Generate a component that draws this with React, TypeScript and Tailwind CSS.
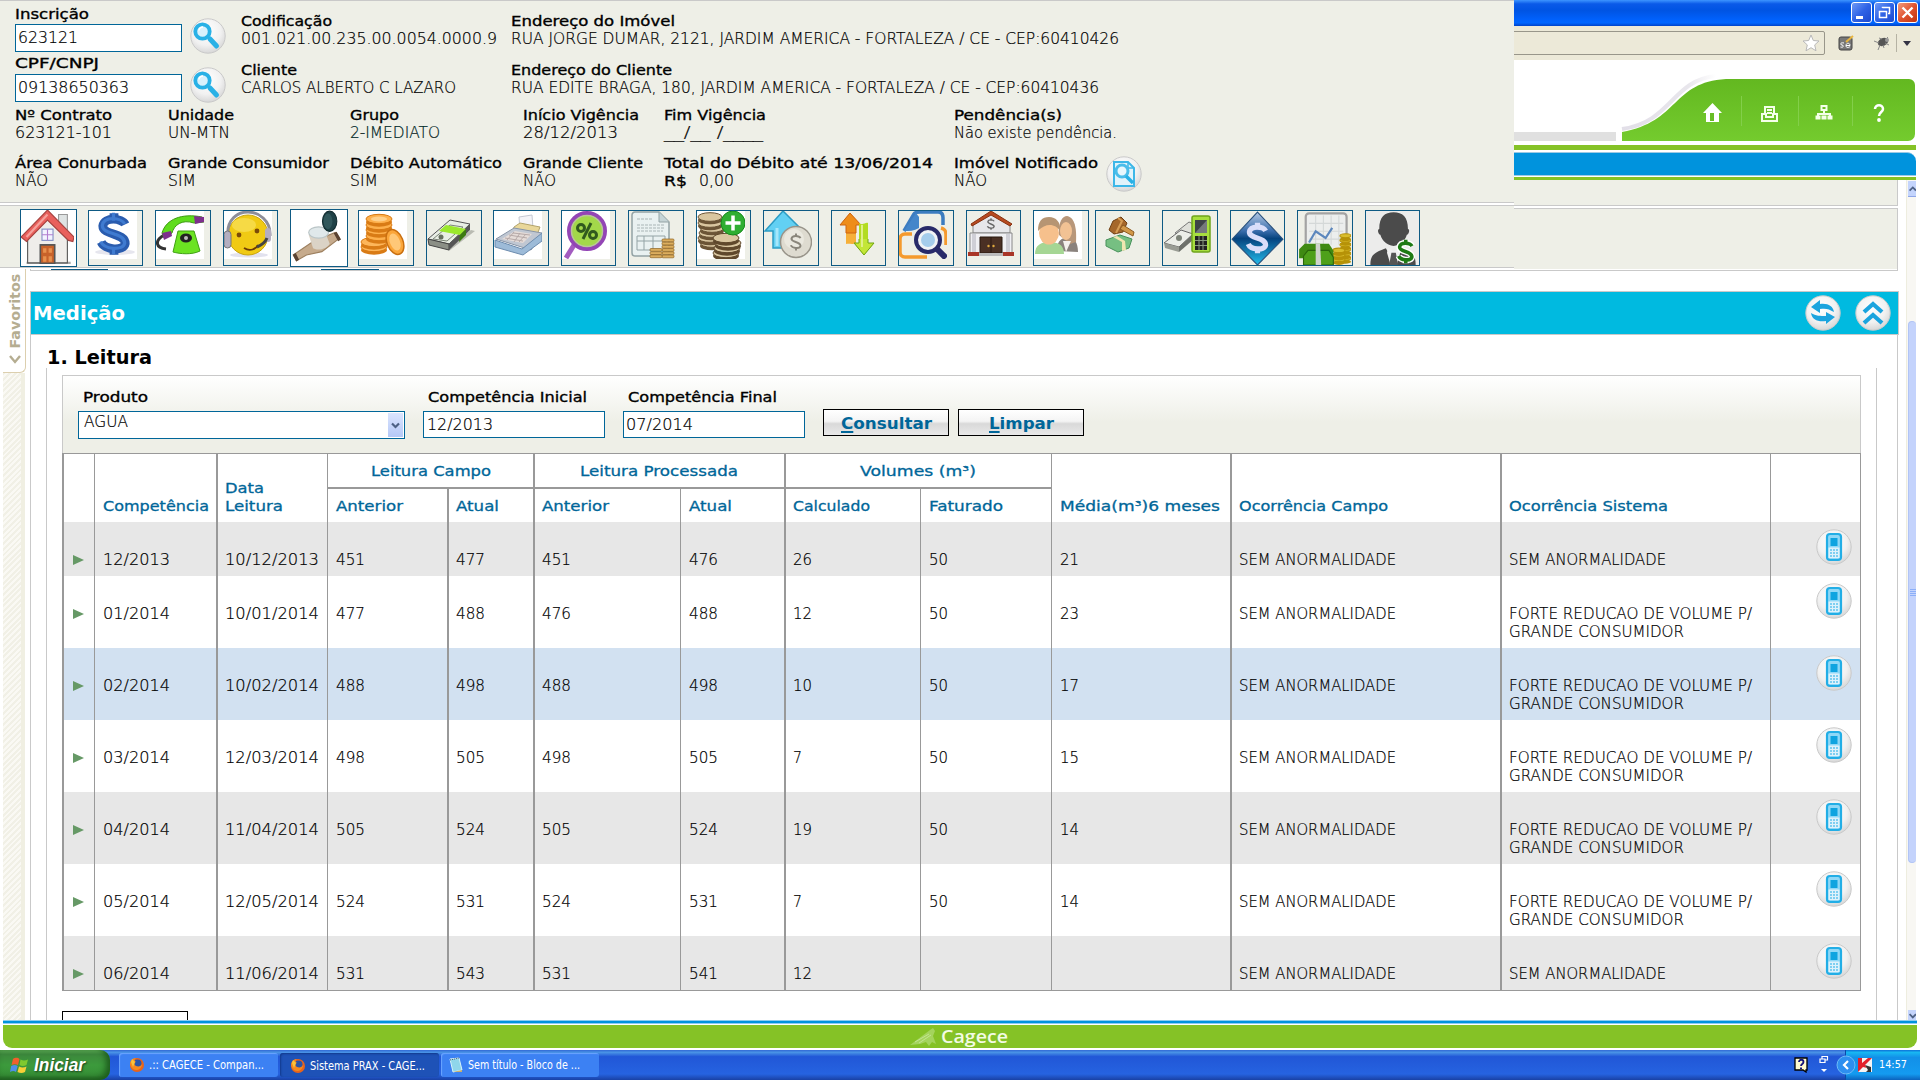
import { useLayoutEffect, useRef, type ReactNode } from 'react';

/* Text run that is stretched horizontally to an exact advance width. */
function T({ w, c = '', children }: { w: number; c?: string; children: ReactNode }) {
  const ref = useRef<HTMLSpanElement>(null);
  useLayoutEffect(() => {
    const el = ref.current;
    if (el && el.offsetWidth) el.style.transform = `scaleX(${w / el.getBoundingClientRect().width})`;
  }, [w]);
  return (
    <span className={`block whitespace-pre leading-[18px] ${c}`} style={{ width: w }}>
      <span ref={ref} className="inline-block origin-left">{children}</span>
    </span>
  );
}

const LABEL = 'text-[14.5px] text-black [-webkit-text-stroke:0.35px_black]';
const VALUE = "font-['DejaVu_Sans_Light','DejaVu_Sans',sans-serif] font-extralight text-[15px] text-black [-webkit-text-stroke:0.2px_black]";
const HEAD = 'text-[14.5px] text-[#006699] [-webkit-text-stroke:0.3px_#006699]';

function Field({ label, lw, value, vw, c = '', vc = '' }: { label: string; lw: number; value: string; vw: number; c?: string; vc?: string }) {
  return (
    <div className={`flex-none ${c}`}>
      <T w={lw} c={LABEL}>{label}</T>
      <T w={vw} c={`${VALUE} ${vc}`}>{value}</T>
    </div>
  );
}

function Orb({ children }: { children: ReactNode }) {
  return (
    <svg viewBox="0 0 36 36" className="block h-9 w-9 flex-none">
      <defs>
        <radialGradient id="orb" cx="45%" cy="35%" r="70%">
          <stop offset="0" stopColor="#fff" />
          <stop offset="0.6" stopColor="#f1f1f1" />
          <stop offset="1" stopColor="#d2d2d2" />
        </radialGradient>
      </defs>
      <circle cx="18" cy="18" r="17.2" fill="url(#orb)" stroke="#c9c9c9" strokeWidth="1" />
      {children}
    </svg>
  );
}

function Lens() {
  return (
    <Orb>
      <path d="M20 21l6.500 7" stroke="#29b1e6" strokeWidth="5" strokeLinecap="round" />
      <circle cx="12.500" cy="13.500" r="7.200" fill="#d9f1fc" stroke="#29b1e6" strokeWidth="3.800" />
      <path d="M9 12.500a4 4 0 014-3.400" stroke="#fff" strokeWidth="1.500" fill="none" />
    </Orb>
  );
}

function Phone() {
  return (
    <Orb>
      <rect x="11" y="5" width="14" height="26" rx="3" fill="#8fd8f7" stroke="#22aee6" strokeWidth="2.200" />
      <rect x="14.500" y="9" width="7" height="8" fill="#0fa4e0" />
      <path d="M12.500 18.500h11v10.500h-11z" fill="#dff2fb" />
      <path d="M14 21h8M14 24h8M14 27h8" stroke="#5fc4ee" strokeWidth="1.500" strokeDasharray="2 1" />
    </Orb>
  );
}

const coin = (x: number, y: number, rx: number, fill: string, stroke: string) => (
  <g key={`${x}-${y}`}>
    <ellipse cx={x} cy={y + 3} rx={rx} ry={rx * 0.36} fill={stroke} />
    <ellipse cx={x} cy={y} rx={rx} ry={rx * 0.36} fill={fill} stroke={stroke} strokeWidth="1" />
  </g>
);

const dollar = (x: number, y: number, s: number, color: string, w: number) => (
  <g transform={`translate(${x} ${y}) scale(${s})`} fill="none" stroke={color} strokeWidth={w}>
    <path d="M7 -6C5 -10 -6 -11 -7 -5C-7 1 7 -1 7 6C6 11 -6 10 -8 5" />
    <path d="M0 -13V-8M0 9V13" />
  </g>
);

const ICONS: { box: string; art: ReactNode; white?: boolean; big?: boolean }[] = [
  { box: 'w-[57px] h-[58px]', white: true, big: true, art: <>
    <path d="M5 47h40" stroke="#aaa" strokeWidth="2" />
    <path d="M34 8V4h8v18h-8z" fill="#dfe3e3" stroke="#999" />
    <path d="M6 26L24 8l18 18v21H6z" fill="#efedea" stroke="#555" strokeWidth="1" />
    <path d="M0 24L24 0l24 24-1 4-4-1L24 9 5 28z" fill="#e9605c" stroke="#a74441" strokeWidth="1" />
    <path d="M5 24L24 4" stroke="#f6a29c" strokeWidth="2" />
    <rect x="19" y="17" width="10" height="10" fill="#f3f3ff" stroke="#8390c4" />
    <path d="M24 17v10M19 22h10" stroke="#b27fd0" />
    <rect x="17.500" y="31" width="13" height="16.500" fill="#c8622a" stroke="#555" strokeWidth="1.500" />
    <path d="M20 34h3v4h-3zM25 34h3v4h-3zM20 41h3v5h-3zM25 41h3v5h-3z" fill="#e8914e" />
  </> },
  { box: 'w-[55px] ml-[11px]', white: true, art: <>
    <ellipse cx="26" cy="41" rx="20" ry="3" fill="#e6e6ee" />{dollar(25, 23, 1.6, '#2a5cae', 5.5)}{dollar(24.500, 22.500, 1.6, '#3f7bd0', 2)}
  </> },
  { box: 'w-[56px] ml-[12px]', white: true, art: <>
    <path d="M8 24C-2 30 0 37 10 38" fill="none" stroke="#333" strokeWidth="3" />
    <path d="M6 22C10 8 26 2 46 6l2 5-10 1C26 8 18 14 16 22l-8 5z" fill="#5fdc1c" stroke="#3d9a12" />
    <path d="M38 5l10 1v5l-9 2zM6 22l9-2 1 5-8 4z" fill="#7d2f8c" />
    <path d="M22 20h16l6 20c-8 4-20 3-27 1z" fill="#6be322" stroke="#3fa013" />
    <ellipse cx="30" cy="27" rx="6" ry="4.500" fill="#222" /><circle cx="30" cy="27" r="2" fill="#bbb" />
  </> },
  { box: 'w-[55px] ml-[12px]', white: true, art: <>
    <ellipse cx="25" cy="44" rx="19" ry="2.500" fill="#e2e2ee" />
    <circle cx="24" cy="24" r="20" fill="#f0ca14" stroke="#c9a40f" />
    <ellipse cx="20" cy="14" rx="12" ry="7" fill="#f6da45" />
    <path d="M4 26C2 8 14 1 24 1s23 8 22 24" fill="none" stroke="#8d8d99" strokeWidth="3" />
    <rect x="0" y="20" width="7" height="17" rx="3.500" fill="#b4aec0" stroke="#777" /><rect x="41" y="17" width="6" height="14" rx="3" fill="#b4aec0" />
    <circle cx="15" cy="24" r="2.400" fill="#7a4a08" /><circle cx="33" cy="20" r="2.400" fill="#7a4a08" />
    <path d="M20 37c6 4 12 1 14-3" fill="none" stroke="#6c3b05" strokeWidth="1.800" /><path d="M43 27c-2 5-5 7-10 9" fill="none" stroke="#444" strokeWidth="3" />
  </> },
  { box: 'w-[58px] h-[58px] ml-[12px]', white: true, big: true, art: <>
    <path d="M2 40l18-12 20-8 4 5-16 12-14 3-9 5z" fill="#c6ab8d" stroke="#9d8060" />
    <path d="M3 39l3 6M40 20l4 7" stroke="#5b4332" strokeWidth="3" />
    <path d="M16 22l4 12c5 3 13 0 15-4l-5-13z" fill="#dbd3c6" />
    <ellipse cx="25" cy="20" rx="9" ry="5" fill="#e0e8ea" stroke="#b9c4c6" />
    <ellipse cx="35" cy="10" rx="6.500" ry="9" fill="#1f4146" stroke="#122c30" /><ellipse cx="33.500" cy="10" rx="4" ry="7" fill="#31575b" />
  </> },
  { box: 'w-[56px] ml-[10px]', white: true, art: <>
    {[36, 31].map((y) => coin(15, y, 13, '#fdb65a', '#d97b15'))}{[25, 19, 14, 8].map((y) => coin(20, y, 13, '#fdb04c', '#d97b15'))}
    <ellipse cx="20" cy="8" rx="8" ry="2.500" fill="#ffd08a" />
    <ellipse cx="36" cy="31" rx="8" ry="13" transform="rotate(-22 36 31)" fill="#fba63a" stroke="#c96f10" strokeWidth="1.500" />
    <ellipse cx="36" cy="31" rx="5" ry="9" transform="rotate(-22 36 31)" fill="#ffc878" />
  </> },
  { box: 'w-[56px] ml-[12px]', art: <>
    <path d="M22 40l26-20-4-1-24 17z" fill="#b9bbb2" />
    <path d="M1 28l22-19 20 4-21 20z" fill="#e8eee4" stroke="#555" /><path d="M1 28l21 5v6L2 34z" fill="#8b8f86" stroke="#444" /><path d="M22 33l21-20v6L22 39z" fill="#555" />
    <path d="M6 28l17-14 13 2-16 14z" fill="none" stroke="#7b8476" /><path d="M12 20l7-6 20 4-6 6z" fill="#9be82c" /><path d="M33 24l6-6v6l-7 7z" fill="#3c7a10" />
    <circle cx="14" cy="26" r="2.500" fill="#67705f" />
  </> },
  { box: 'w-[56px] ml-[11px]', white: true, art: <>
    <path d="M25 6l13-2 1 14-13 1z" fill="#f4f4f8" stroke="#c5c8d2" />
    <path d="M20 16l6-4 20 4-3 8-24-5z" fill="#e9d79a" stroke="#b3a46c" />
    <path d="M2 28l18-11 28 5-11 17z" fill="#c0c7d2" stroke="#8794a7" />
    <path d="M8 28l13-8 17 3-9 9z" fill="#e5dcd8" /><path d="M11 27l18 3M15 24l18 3M19 22l17 2M20 21l-7 8M26 22l-6 9M32 23l-7 8" stroke="#b6a9a8" />
    <path d="M1 29l27 9 20-16v8L29 44 1 36z" fill="#9dbbd8" stroke="#6d8cae" />
  </> },
  { box: 'w-[55px] ml-[12px]', white: true, art: <>
    <path d="M12 34L4 47" stroke="#a35cc0" strokeWidth="5" />
    <circle cx="25" cy="20" r="18" fill="#a3d84a" stroke="#9345b5" strokeWidth="4" /><circle cx="25" cy="20" r="15.500" fill="none" stroke="#b9c59a" strokeWidth="1.500" />
    <g fill="none" stroke="#315a1e" strokeWidth="3"><circle cx="19" cy="17" r="3.500" /><circle cx="31" cy="24" r="3.500" /><path d="M29 12L21 28" /></g>
  </> },
  { box: 'w-[56px] ml-[12px]', art: <>
    <path d="M6 1h24l10 10v34H6a3 3 0 01-3-3V4a3 3 0 013-3z" fill="#e9f1f1" stroke="#93a3a5" strokeWidth="1.500" /><path d="M30 1v10h10" fill="#c5d4d6" stroke="#93a3a5" />
    <path d="M8 8h16M8 14h28M8 17h28M8 20h26" stroke="#a9b5b6" strokeDasharray="3 1" />
    <path d="M8 25h28v14H8zM8 30h28M15 25v14M24 25v14" stroke="#93a3a5" fill="none" />
    {[0, 1, 2, 3, 4, 5].map((i) => <rect key={i} x="33" y={28 + i * 3.200} width="12" height="2.800" rx="1" fill="#dcae5f" stroke="#8f6422" strokeWidth=".7" />)}
    {[0, 1, 2].map((i) => <rect key={i} x="21" y={37.500 + i * 3.200} width="12" height="2.800" rx="1" fill="#dcae5f" stroke="#8f6422" strokeWidth=".7" />)}
  </> },
  { box: 'w-[55px] ml-[12px]', white: true, art: <>
    {[32, 27, 22, 17, 12, 6].map((y) => coin(13 + (y % 3), y, 12, '#d9c6a0', '#6b5436'))}
    {[42, 37, 32, 27].map((y) => coin(29 + (y % 3), y, 13, '#d9c6a0', '#5f482c'))}
    <circle cx="36" cy="12" r="12" fill="#2fae32" stroke="#178a1c" /><path d="M36 4.500v15M28.500 12h15" stroke="#fff" strokeWidth="3.500" />
  </> },
  { box: 'w-[56px] ml-[12px]', art: <>
    <path d="M19 0l19 19-9 1v17H9V20H1z" fill="#62d0f3" stroke="#2d9cc4" strokeWidth="1.500" /><path d="M13 17v18" stroke="#a5e7fb" strokeWidth="3" />
    <circle cx="32" cy="31" r="15.500" fill="#dedbd0" stroke="#98948a" strokeWidth="1.500" /><circle cx="30" cy="28" r="10" fill="#eae8df" />{dollar(32, 31, 0.65, '#8a867b', 3)}
  </> },
  { box: 'w-[55px] ml-[12px]', art: <>
    <path d="M18 2l11 12h-5v18c-4 2-7 0-10 1V14H8z" fill="#f6b03a" /><path d="M18 2l11 12h-5v8H14v-8H8z" fill="#ee8d1a" stroke="#cf6411" />
    <path d="M27 12c4 3 6-1 9 0v20h6L32 44 22 32h5z" fill="#b3dc22" /><path d="M27 28v4h-5l10 12 10-12h-6v-4" fill="#c3e637" stroke="#6fa410" /><path d="M30 14v22" stroke="#dff08a" strokeWidth="2" />
  </> },
  { box: 'w-[56px] ml-[12px]', art: <>
    <path d="M5 20L15 3c2-3 6-2 10-2h14c4 0 5 3 5 6v7" fill="none" stroke="#3c7cc0" strokeWidth="3.500" /><path d="M5 20L17 2l3 4v11c-5 3-10 3-15 3z" fill="#4486ca" />
    <path d="M13 23H6c-3 0-5 2-5 5v13c0 3 2 5 5 5h22M42 17c4 1 5 3 5 7v10" fill="none" stroke="#f59a2e" strokeWidth="3.500" />
    <path d="M36 36l11 11" stroke="#282a69" strokeWidth="6" /><circle cx="29" cy="29" r="12" fill="#f1f3f6" stroke="#282a69" strokeWidth="4" /><circle cx="29" cy="29" r="7" fill="#a6cdec" />
  </> },
  { box: 'w-[55px] ml-[12px]', art: <>
    <path d="M6 14L24 2l19 12v8H6z" fill="#e7e7ea" stroke="#888" /><path d="M4 13L24 0l21 13-2 2L24 4 5 15z" fill="#b84a21" stroke="#86310f" />
    <path d="M3 22h42v20H3z" fill="#f0f0f3" stroke="#888" /><path d="M7 23v19M41 23v19" stroke="#cfcfd6" strokeWidth="4" />
    <path d="M13 26h22v16H13z" fill="#4a3024" stroke="#29180f" /><path d="M24 26v16" stroke="#2a1810" /><circle cx="21.500" cy="35" r="1.200" fill="#e0a93e" /><circle cx="26.500" cy="35" r="1.200" fill="#e0a93e" />
    <path d="M1 41h11v4H1zM36 41h11v4H36z" fill="#a93527" /><path d="M12 42h24v3H12z" fill="#bbb" />{dollar(24, 13, 0.45, '#666', 3)}
  </> },
  { box: 'w-[56px] ml-[12px]', white: true, art: <>
    <path d="M23 40c0-12 6-13 11-14 6 1 10 5 10 15z" fill="#8a827d" /><path d="M25 24c-1-14 4-19 8-19 6 1 10 8 9 26l-6 2z" fill="#b8977a" />
    <ellipse cx="32" cy="20" rx="6" ry="9" fill="#f2c294" /><path d="M29 30l3 11 5-11z" fill="#f4f0ec" />
    <path d="M1 43c0-9 6-12 14-12s15 2 15 12z" fill="#a5d694" /><ellipse cx="15" cy="22" rx="10" ry="11.500" fill="#f6c08c" />
    <path d="M4 20C4 10 8 6 15 6s12 5 11 14c-4-7-14-9-22 0z" fill="#b69573" />
  </> },
  { box: 'w-[55px] ml-[6px]', art: <>
    <path d="M10 29l14-5 12 4-3 9-11 4-12-6z" fill="#76bf82" stroke="#47915a" /><path d="M17 26l9 5v9l4-1-1-9-8-5z" fill="#efe6b0" />
    <path d="M17 10l8-4 6 6-4 9-9 2-5-4z" fill="#a5672a" stroke="#6f3f12" /><path d="M27 14l11 7-1 4-13-7z" fill="#d29848" stroke="#8c5a20" /><path d="M22 7l4 3-6 12" stroke="#d79d55" fill="none" strokeWidth="2" />
  </> },
  { box: 'w-[56px] ml-[12px]', art: <>
    <path d="M12 22l14-11 11 5-11 10z" fill="#dfe0da" stroke="#777" /><path d="M1 32l17-13 12 4-14 13z" fill="#eceee8" stroke="#666" /><path d="M1 32l15 4v5L2 37z" fill="#999c94" /><path d="M16 36l14-13v6L16 41z" fill="#6e716b" />
    <circle cx="16" cy="27" r="3" fill="#7d8378" />
    <rect x="29" y="5" width="18" height="36" rx="2" fill="#a7de3e" stroke="#6fa41d" strokeWidth="1.500" /><rect x="32" y="9" width="12" height="13" fill="#3e4347" /><path d="M32 22l12-13v13z" fill="#75797c" />
    <path d="M32 25h12v14H32z" fill="#222" /><path d="M32 29.500h12M32 34.500h12M36 25v14M40 25v14" stroke="#8a9a80" />
  </> },
  { box: 'w-[55px] ml-[12px]', big: true, art: <>
    <defs><linearGradient id="dia" x1="0" y1="0" x2="0" y2="1"><stop offset="0" stopColor="#b5cae4" /><stop offset=".35" stopColor="#3c6fae" /><stop offset=".5" stopColor="#05437e" /><stop offset="1" stopColor="#23bdec" /></linearGradient></defs>
    <path d="M24 1l23 24-23 23L1 25z" fill="url(#dia)" stroke="#29517d" />{dollar(24, 24, 1.05, '#d9defa', 4.500)}
  </> },
  { box: 'w-[56px] ml-[12px]', big: true, art: <>
    <rect x="7" y="2" width="37" height="36" rx="3" fill="#eceeed" stroke="#a3a3a3" strokeWidth="2" /><path d="M10 11h31M10 18h31M10 25h31M16 4v26M23 4v26M30 4v26M37 4v26" stroke="#d4d8d8" />
    <path d="M10 28l6-10 9 6 6-9" fill="none" stroke="#5c87bd" strokeWidth="2" />
    {[42, 38, 34, 30, 26, 22].map((y) => coin(43, y, 5, '#d9bd2c', '#b69208'))}{[43, 39, 35].map((y) => coin(37, y, 5.5, '#d9bd2c', '#b69208'))}
    <path d="M1 34l5-5h22l4 6v7H1z" fill="#3f8a12" /><path d="M5 40l4-5h19l4 6v7H5z" fill="#4ea01a" stroke="#2a660a" /><path d="M16 29h4l1 19h-5z" fill="#cfd3cd" />
  </> },
  { box: 'w-[55px] ml-[12px]', big: true, art: <>
    <rect width="48" height="50" fill="#ececeb" /><path d="M12 16C12 5 17 1 25 1s13 4 13 15c2 0 1 5-1 5-2 6-6 9-12 10-6-1-10-4-12-10-2 0-3-5-1-5z" fill="#4b4b4b" />
    <path d="M4 48c0-9 3-11 14-15l7 13 7-13c10 3 13 6 13 15z" fill="#4b4b4b" /><path d="M20 33l5 3 5-3 1 4-3 10h-6l-3-10z" fill="#f1f1f1" /><path d="M23 37h4l2 11h-8z" fill="#555" />
    {dollar(36, 36, 0.8, '#fff', 7)}{dollar(36, 36, 0.8, '#1e7a14', 4)}
  </> },
];

function Toolbar() {
  return (
    <div className="flex h-[63px] items-center border-y border-[#c9c9c9] bg-[#eeefe7] pl-5 pt-[2px]">
      {ICONS.map((it, i) => (
        <div key={i} className={`flex-none border border-[#0e5a84] ${it.box} ${it.box.includes('h-[58px]') ? 'bg-white' : 'h-14'}`}>
          <svg viewBox="0 0 48 48" className={`block ${it.big ? 'h-[54px] w-[53px]' : 'h-12 w-12'} ${it.white ? 'bg-white' : ''}`} preserveAspectRatio="none">{it.art}</svg>
        </div>
      ))}
    </div>
  );
}

function ClientPanel() {
  return (
    <div className="absolute left-0 top-0 h-[269px] w-[1514px] overflow-hidden bg-white">
      <div className="h-[203px] border-y border-[#c9c9c9] bg-[#eeefe7] pl-[15px]">
        <div className="flex h-[102px]">
          <div className="w-[175px]">
            <div className="pt-1"><T w={74} c={LABEL}>Inscrição</T></div>
            <div className="mt-px flex h-7 w-[167px] items-center border border-[#006699] bg-white pl-[2px]"><T w={60} c={VALUE}>623121</T></div>
            <div className="pt-[2px]"><T w={84} c={LABEL}>CPF/CNPJ</T></div>
            <div className="mt-[2px] flex h-7 w-[167px] items-center border border-[#006699] bg-white pl-[2px]"><T w={111} c={VALUE}>09138650363</T></div>
          </div>
          <div className="flex w-[51px] flex-col gap-[13px] pt-[17px]"><Lens /><Lens /></div>
          <div className="flex w-[270px] flex-col gap-[13px] pt-[11px]">
            <Field label="Codificação" lw={91} value="001.021.00.235.00.0054.0000.9" vw={256} />
            <Field label="Cliente" lw={56} value="CARLOS ALBERTO C LAZARO" vw={215} />
          </div>
          <div className="flex flex-col gap-[13px] pt-[11px]">
            <Field label="Endereço do Imóvel" lw={164} value="RUA JORGE DUMAR, 2121, JARDIM AMERICA - FORTALEZA / CE - CEP:60410426" vw={608} />
            <Field label="Endereço do Cliente" lw={161} value="RUA EDITE BRAGA, 180, JARDIM AMERICA - FORTALEZA / CE - CEP:60410436" vw={588} />
          </div>
        </div>
        <div className="flex h-12 pt-[3px]">
          <Field c="w-[153px]" label="Nº Contrato" lw={97} value="623121-101" vw={97} />
          <Field c="w-[182px]" label="Unidade" lw={66} value="UN-MTN" vw={62} />
          <Field c="w-[173px]" label="Grupo" lw={49} value="2-IMEDIATO" vw={90} vc="!text-[#003a3a]" />
          <Field c="w-[141px]" label="Início Vigência" lw={116} value="28/12/2013" vw={95} />
          <Field c="w-[290px]" label="Fim Vigência" lw={102} value="__/__ /____" vw={99} />
          <Field label="Pendência(s)" lw={108} value="Não existe pendência." vw={163} />
        </div>
        <div className="flex h-12 pt-[3px]">
          <Field c="w-[153px]" label="Área Conurbada" lw={132} value="NÃO" vw={33} />
          <Field c="w-[182px]" label="Grande Consumidor" lw={161} value="SIM" vw={28} />
          <Field c="w-[173px]" label="Débito Automático" lw={152} value="SIM" vw={28} />
          <Field c="w-[141px]" label="Grande Cliente" lw={120} value="NÃO" vw={33} />
          <div className="w-[290px]">
            <T w={269} c={LABEL}>Total do Débito até 13/06/2014</T>
            <div className="flex gap-3"><T w={23} c={LABEL}>R$</T><T w={35} c={VALUE}>0,00</T></div>
          </div>
          <Field c="w-[152px]" label="Imóvel Notificado" lw={144} value="NÃO" vw={33} />
          <div className="mt-[2px]">
            <Orb>
              <path d="M8 6h14l6 6v18H8z" fill="#e2f3fb" stroke="#3db7e8" strokeWidth="2" /><path d="M22 6v6h6" fill="none" stroke="#3db7e8" strokeWidth="1.500" />
              <circle cx="16" cy="15" r="6" fill="#e8f7fd" stroke="#4bbdea" strokeWidth="3" /><path d="M20 20l7 7" stroke="#29b1e6" strokeWidth="3.500" />
            </Orb>
          </div>
        </div>
      </div>
      <div className="mt-[2px]"><Toolbar /></div>
    </div>
  );
}

function WinButton({ red, children }: { red?: boolean; children: ReactNode }) {
  return (
    <div className={`h-[21px] w-[21px] rounded-[3px] border border-white ${red ? 'bg-gradient-to-br from-[#f0997c] via-[#e0532f] to-[#c0340f]' : 'bg-gradient-to-br from-[#6f98f5] via-[#2f63e6] to-[#1c49cf]'}`}>
      <svg viewBox="0 0 19 19" className="block h-[19px] w-[19px]" fill="none" stroke="#fff">{children}</svg>
    </div>
  );
}

function BrowserTop() {
  return (
    <>
      <div className="flex h-[26px] flex-none justify-end gap-[2px] bg-[linear-gradient(#3d95ff_0,#0a5ae8_15%,#0054e3_40%,#0061fc_75%,#0066ff_88%,#0042c8_100%)] pr-[2px] pt-[2px]">
        <WinButton><path d="M4 14.500h7" strokeWidth="3" /></WinButton>
        <WinButton><path d="M7.500 5V4.500h7v6H13M4.500 8.500h7v6h-7z" strokeWidth="1.500" /></WinButton>
        <WinButton red><path d="M4.500 4.500l10 10M14.500 4.500l-10 10" strokeWidth="2.400" /></WinButton>
      </div>
      <div className="flex h-[34px] flex-none items-center bg-[#ece9d8]">
        <div className="mb-px flex h-6 w-[1825px] items-center justify-end rounded-[2px] border border-[#98968a] pr-[4px]">
          <svg viewBox="0 0 18 18" className="h-[18px] w-[18px]"><path d="M9 1l2.300 5.500 5.700.5-4.300 3.900 1.300 5.900L9 13.700l-5 3.100 1.300-5.900L1 7l5.700-.5z" fill="#fff" stroke="#b8b8b8" /></svg>
        </div>
        <svg viewBox="0 0 16 16" className="ml-[13px] h-4 w-4"><rect x="1" y="2" width="13" height="13" rx="2" fill="#777" stroke="#444" /><path d="M6 8c-4-1-4 2-2 2s2 3-1.500 2M8 10.500h4c0-3-4-3-4 0s3 2 4 1" stroke="#fff" fill="none" /><path d="M8 7l7-6" stroke="#e8b43d" strokeWidth="2" /></svg>
        <svg viewBox="0 0 16 14" className="ml-[20px] h-[14px] w-4"><ellipse cx="9" cy="6" rx="5.500" ry="3.800" transform="rotate(-25 9 6)" fill="#555" /><path d="M5 7L0 5M6 9l-2 5M9 9l1 3M11 7l4 2M8 3L5 2M12 3l2-2" stroke="#888" /><circle cx="13" cy="4" r="2" fill="#999" /></svg>
        <div className="ml-[6px] h-[18px] w-px bg-[#b5b2a3]" />
        <svg viewBox="0 0 8 5" className="ml-[6px] h-[5px] w-2"><path d="M0 0h8L4 5z" fill="#334" /></svg>
      </div>
    </>
  );
}

function SiteHeader() {
  return (
    <div className="flex h-[120px] flex-none flex-col bg-white pr-1">
      <div className="flex h-[81px] items-end">
        <div className="h-[9px] w-[1616px] bg-[#e0e0e0]" />
        <svg viewBox="1616 60 300 81" className="h-[81px] w-[300px]">
          <defs>
            <linearGradient id="tab" x1="0" y1="0" x2="0" y2="1"><stop offset="0" stopColor="#63b820" /><stop offset="1" stopColor="#74cb2e" /></linearGradient>
            <linearGradient id="glow" x1="0" y1="0" x2="1" y2="0"><stop offset="0" stopColor="#e2dfe8" /><stop offset=".7" stopColor="#e8e6ec" /><stop offset="1" stopColor="#ffffff" /></linearGradient>
          </defs>
          <path d="M1622 129C1672 122 1672 80 1716 76" fill="none" stroke="url(#glow)" strokeWidth="4" />
          <path d="M1622 141v-9C1679 122 1672 82 1726 79H1909a6 6 0 016 6v49a7 7 0 01-7 7z" fill="url(#tab)" />
          <path d="M1741.500 96v30M1798.500 96v30M1852.500 96v30" stroke="#83cf4a" />
          <path d="M1703 113l9.500-10 9.500 10h-3v9h-13v-9z" fill="#fff" /><path d="M1710 113h4v8h-4z" fill="#68bd25" />
          <g fill="none" stroke="#f4ffe9" strokeWidth="2"><path d="M1765 115v-8h9v8M1762 114h-0v7h15v-7h-4v3h-7v-3zM1767 110h5M1767 113h5" /><path d="M1821.500 106h5v4h-5zM1824 110v4M1818 116v-2h12v2M1816.500 116.500h3v2h-3zM1822.500 116.500h3v2h-3zM1828.500 116.500h3v2h-3z" /></g>
          <path d="M1875 109c0-5 8-5 8 0 0 3-4 3-4 7" fill="none" stroke="#fff" strokeWidth="2.500" /><circle cx="1879" cy="120" r="1.900" fill="#fff" />
        </svg>
      </div>
      <div className="mt-1 h-[5px] bg-[#85c226]" />
      <div className="mt-[2px] h-[24px] rounded-tr-[9px] border-y border-[#9cc9e4] bg-[#0093dd]" />
      <div className="mt-px h-[3px] bg-[#85c226]" />
    </div>
  );
}

function Scrollbar() {
  return (
    <div className="ml-[7px] mr-1 flex w-[10px] flex-none flex-col overflow-hidden border-l border-[#eeeddf] bg-[#f8f7f3]">
      <div className="ml-px mt-px flex h-4 items-center justify-center border-b border-[#8ea6e8] bg-[#c4d4fc]"><svg viewBox="0 0 10 8" className="h-2 w-[10px]"><path d="M2 6l4-4 4 4" fill="none" stroke="#4d6185" strokeWidth="2.200" /></svg></div>
      <div className="ml-px mt-[124px] flex h-[542px] flex-col items-end justify-center gap-px rounded-sm border border-[#b1c4f5] border-r-0 bg-[#c4d3fc]">
        {[0, 1, 2, 3].map((i) => <div key={i} className="h-px w-[6px] bg-[#8caff8]" />)}
      </div>
      <div className="ml-px mt-auto flex h-[10px] items-center justify-center bg-[#c4d4fc]"><svg viewBox="0 0 10 8" className="h-2 w-[10px]"><path d="M2 3l4 4 4-4" fill="none" stroke="#4d6185" strokeWidth="2.200" /></svg></div>
    </div>
  );
}

const COLS = 'grid grid-cols-[32px_122px_111px_120px_86px_147px_104px_136px_131px_179px_270px_270px_91px]';
const BORDERS = ['border-l-2', 'border-l pl-[8px]', 'border-l-2 pl-[7px]', 'border-l pl-[8px]', 'border-l-2 pl-[7px]', 'border-l-2 pl-[7px]', 'border-l pl-[8px]', 'border-l-2 pl-[7px]', 'border-l pl-[8px]', 'border-l pl-[8px]', 'border-l-2 pl-[7px]', 'border-l-2 pl-[7px]', 'border-x'];

const F: [string, number][] = [['FORTE REDUCAO DE VOLUME P/', 243], ['GRANDE CONSUMIDOR', 175]];
const S: [string, number][] = [['SEM ANORMALIDADE', 157]];
const ROWS: { v: string[]; s: [string, number][] }[] = [
  { v: ['12/2013', '10/12/2013', '451', '477', '451', '476', '26', '50', '21'], s: S },
  { v: ['01/2014', '10/01/2014', '477', '488', '476', '488', '12', '50', '23'], s: F },
  { v: ['02/2014', '10/02/2014', '488', '498', '488', '498', '10', '50', '17'], s: F },
  { v: ['03/2014', '12/03/2014', '498', '505', '498', '505', '7', '50', '15'], s: F },
  { v: ['04/2014', '11/04/2014', '505', '524', '505', '524', '19', '50', '14'], s: F },
  { v: ['05/2014', '12/05/2014', '524', '531', '524', '531', '7', '50', '14'], s: F },
  { v: ['06/2014', '11/06/2014', '531', '543', '531', '541', '12', '', ''], s: S },
];
const WIDTHS: Record<number, number> = { 1: 9, 2: 19, 3: 29, 7: 67, 10: 94 };

function Single({ i, children }: { i: number; children?: ReactNode }) {
  return <div className={`flex flex-col justify-end border-[#999] pb-[7px] ${BORDERS[i]}`}>{children}</div>;
}

function Group({ title, tw, span, l, r }: { title: string; tw: number; span: string; l: [number, string, number]; r: [number, string, number] }) {
  return (
    <div className={`grid grid-rows-[35px_33px] ${span}`}>
      <div className={`col-span-2 flex items-center justify-center border-b-2 border-[#999] pr-[8px] pt-px ${BORDERS[l[0]]}`}><T w={tw} c={HEAD}>{title}</T></div>
      <div className={`flex items-center border-[#999] pt-px ${BORDERS[l[0]]}`}><T w={l[2]} c={HEAD}>{l[1]}</T></div>
      <div className={`flex items-center border-[#999] pt-px ${BORDERS[r[0]]}`}><T w={r[2]} c={HEAD}>{r[1]}</T></div>
    </div>
  );
}

function ReadingsTable() {
  return (
    <div className="w-[1799px] border-b border-[#999] bg-white">
      <div className={`${COLS} h-[69px] border-t border-[#999]`}>
        <Single i={0} />
        <Single i={1}><T w={106} c={HEAD}>Competência</T></Single>
        <Single i={2}><T w={39} c={HEAD}>Data</T><T w={58} c={HEAD}>Leitura</T></Single>
        <Group title="Leitura Campo" tw={120} span="col-span-2 grid-cols-[120px_86px]" l={[3, 'Anterior', 67]} r={[4, 'Atual', 43]} />
        <Group title="Leitura Processada" tw={158} span="col-span-2 grid-cols-[147px_104px]" l={[5, 'Anterior', 67]} r={[6, 'Atual', 43]} />
        <Group title="Volumes (m³)" tw={116} span="col-span-2 grid-cols-[136px_131px]" l={[7, 'Calculado', 77]} r={[8, 'Faturado', 74]} />
        <Single i={9}><T w={160} c={HEAD}>Média(m³)6 meses</T></Single>
        <Single i={10}><T w={149} c={HEAD}>Ocorrência Campo</T></Single>
        <Single i={11}><T w={159} c={HEAD}>Ocorrência Sistema</T></Single>
        <Single i={12} />
      </div>
      {ROWS.map((row, r) => (
        <div key={r} className={`${COLS} ${row.s.length > 1 ? 'h-[72px]' : 'h-[54px]'} ${r === 2 ? 'bg-[#d2e1f1]' : r % 2 ? 'bg-white' : 'bg-[#e7e7e7]'}`}>
          <div className="border-l-2 border-[#999] pl-[9px] pt-[33px]">
            <svg viewBox="0 0 11 10" className="h-[10px] w-[11px]"><path d="M0 0l11 5-11 5z" fill="#669966" /></svg>
          </div>
          {row.v.map((t, i) => (
            <div key={i} className={`border-[#999] pt-[29px] ${BORDERS[i + 1]}`}>{t && <T w={WIDTHS[t.length]} c={VALUE}>{t}</T>}</div>
          ))}
          <div className={`border-[#999] pt-[29px] ${BORDERS[10]}`}><T w={157} c={VALUE}>SEM ANORMALIDADE</T></div>
          <div className={`border-[#999] pt-[29px] ${BORDERS[11]}`}>{row.s.map(([t, w]) => <T key={t} w={w} c={VALUE}>{t}</T>)}</div>
          <div className="flex justify-end border-x border-[#999] pr-2 pt-[7px]"><Phone /></div>
        </div>
      ))}
    </div>
  );
}

function Filter() {
  const btn = 'flex h-[27px] w-[126px] items-center justify-center border border-black bg-[linear-gradient(#fff_0%,#f4f4f4_45%,#d9d9d9_55%,#e9e9e9_100%)] pt-[2px] text-[16px] font-bold text-[#006699]';
  return (
    <div className="mt-[7px] flex h-[78px] w-[1799px] border border-b-0 border-[#c9c9c9] bg-[linear-gradient(#fff_0%,#eeefe7_60%)] pl-[15px] pt-[12px]">
      <div className="w-[345px]">
        <T w={65} c={`ml-[5px] ${LABEL}`}>Produto</T>
        <div className="mt-[5px] flex h-7 w-[327px] justify-between border border-[#006699] bg-white py-px pl-[5px] pr-px">
          <T w={44} c={VALUE}>AGUA</T>
          <div className="flex h-6 w-[15px] items-center justify-center bg-gradient-to-b from-[#dbe5fe] to-[#b5c8f7]"><svg viewBox="0 0 9 7" className="h-[7px] w-[9px]"><path d="M1 1.500l3.500 3.500L8 1.500" fill="none" stroke="#4d6185" strokeWidth="2.200" /></svg></div>
        </div>
      </div>
      <div className="w-[200px]">
        <T w={159} c={`ml-[5px] ${LABEL}`}>Competência Inicial</T>
        <div className="mt-[5px] flex h-[27px] w-[182px] items-center border border-[#006699] bg-white pl-[3px]"><T w={66} c={VALUE}>12/2013</T></div>
      </div>
      <div className="w-[200px]">
        <T w={149} c={`ml-[5px] ${LABEL}`}>Competência Final</T>
        <div className="mt-[5px] flex h-[27px] w-[182px] items-center border border-[#006699] bg-white pl-[2px]"><T w={67} c={VALUE}>07/2014</T></div>
      </div>
      <div className="mt-[21px] flex gap-[9px]">
        <div className={btn}><T w={91}><span className="underline decoration-2 underline-offset-2">C</span>onsultar</T></div>
        <div className={btn}><T w={65}><span className="underline decoration-2 underline-offset-2">L</span>impar</T></div>
      </div>
    </div>
  );
}

function Content() {
  return (
    <div className="flex h-[840px] flex-none overflow-hidden bg-white">
      <div className="flex w-[30px] flex-none flex-col pl-[3px] pr-1">
        <div className="flex h-[193px] flex-col items-center rounded-br-[6px] border-b border-r border-[#dccfae] bg-white pl-[2px] pt-[93px]">
          <div className="flex h-[76px] items-center justify-center">
            <span className="-rotate-90 whitespace-nowrap text-[14.3px] font-bold leading-none text-[#b5ad91]">Favoritos</span>
          </div>
          <svg viewBox="0 0 14 10" className="mt-[6px] h-[10px] w-[14px]"><path d="M2 1l5 6 5-6" fill="none" stroke="#b5ad91" strokeWidth="2.400" /></svg>
        </div>
        <div className="w-[22px] flex-1 border-r-4 border-[#f0efe2] bg-[repeating-linear-gradient(135deg,#f1f0e6_0_2px,#faf9f4_2px_4px)]" />
      </div>
      <div className="w-[1869px] flex-none">
        <div className="h-[26px] w-[1868px] border-b border-r border-[#c9c9c9] bg-[#eeefe7]" />
        <div className="mt-[2px] h-[63px] w-[1868px] border border-[#c9c9c9] bg-[#eeefe7]">
          <div className="mt-[60px] flex h-px gap-[213px] bg-white pl-[20px]"><div className="h-px w-[57px] bg-[#0e5a84]" /><div className="h-px w-[58px] bg-[#0e5a84]" /></div>
        </div>
        <div className="mt-5 flex h-11 items-center border border-[#c9c9c9] bg-[#00bae0] pl-[2px] pr-[7px]">
          <T w={92} c="flex-1 text-[19px] font-bold text-white">Medição</T>
          <div className="ml-auto flex gap-[14px]">
            <Orb><path d="M6 12l9-7v4c8-1 13 2 14 8-5-3-8-4-14-3v4zM30 22l-9 7v-3C13 27 7 25 6 18c5 3 9 3 15 3v-4z" fill="#1ba4de" /></Orb>
            <Orb><path d="M9 17l9-8 9 8M9 28l9-8 9 8" fill="none" stroke="#1ba4de" strokeWidth="4.200" /></Orb>
          </div>
        </div>
        <div className="h-[685px] w-[1868px] border-x border-[#c9c9c9]">
          <div className="h-[33px] pl-[16px] pt-[13px]"><T w={105} c="text-[19px] font-bold text-black">1. Leitura</T></div>
          <div className="ml-[15px] h-[652px] w-[1831px] overflow-hidden border-x border-[#c9c9c9] pl-[15px]">
            <Filter />
            <ReadingsTable />
            <div className="mt-5 h-7 w-[126px] border border-black bg-white" />
          </div>
        </div>
      </div>
      <Scrollbar />
    </div>
  );
}

function Footer() {
  return (
    <div className="h-[30px] flex-none bg-white pl-[3px] pr-[3px]">
      <div className="h-1 border-y border-[#8ecdf0] bg-[#0093dd]" />
      <div className="mt-px flex h-[23px] items-center justify-center rounded-b-[9px] bg-[#85c226]">
        <svg viewBox="0 0 28 20" className="mr-[3px] h-5 w-7"><path d="M0 18L20 3l3-2 2 3-2 5 3 8-4-2-3 4-3-4-6 2z" fill="#a4d45c" /><path d="M5 15l14-8M9 16l12-8" stroke="#c3e491" /></svg>
        <T w={67} c="mr-[3px] -mt-[2px] font-['Open_Sans'] text-[18px] font-semibold text-[#f3fbe4]">Cagece</T>
      </div>
    </div>
  );
}

function Firefox() {
  return (
    <svg viewBox="0 0 16 16" className="h-4 w-4 flex-none"><circle cx="8" cy="8" r="7" fill="#e8641b" /><circle cx="8.500" cy="6.500" r="4" fill="#2b55a8" /><path d="M1 6c1-4 4-5 6-5-2 1-2 3 0 4-2 0-2 3 0 4 3 1 5 0 6-2 0 4-3 6-6 6S1 10 1 6z" fill="#f58a1f" /><path d="M2 5l1-3 3 3-2 5z" fill="#fbc33b" /></svg>
  );
}

function Task({ c, w, icon, children }: { c: string; w: number; icon: ReactNode; children: string }) {
  return <div className={`flex h-6 items-center gap-[4px] rounded-[3px] ${c}`}>{icon}<T w={w} c="text-[11.5px] text-white">{children}</T></div>;
}

function Taskbar() {
  return (
    <div className="flex h-[30px] flex-none items-center bg-[linear-gradient(#3168d5_0%,#4993e6_8%,#2157d7_22%,#2663e0_80%,#1941a5_100%)] text-white">
      <div className="flex h-[30px] w-[110px] items-center rounded-r-[10px] bg-[linear-gradient(#5eac56_0%,#3c873c_14%,#3c9a3c_50%,#379137_85%,#256b25_100%)] pl-[10px] shadow-[inset_-4px_-2px_6px_#1d5c1d]">
        <svg viewBox="0 0 20 18" className="h-[18px] w-5"><path d="M3 3c3-2 5-1 6.500 0L8 9c-2-1-4-1-6.500 0z" fill="#f0602c" /><path d="M10.500 3.500c3 1.500 5 1 7.500 0L16.500 9c-3 1.500-5 1-7 0z" fill="#7fc92f" /><path d="M1.200 10c3-1.500 4.500-1 6.500 0L6 16c-2-1.500-4-1-6 0z" fill="#4f8fe8" /><path d="M9 10.500c3 1.500 5 1 7.500 0L15 16c-3 1.500-5 1-7.500 0z" fill="#f8cf37" /></svg>
        <T w={51} c="ml-[4px] font-['Liberation_Sans'] text-[18px] font-bold italic [text-shadow:1px_1px_2px_#1a3d1a]">Iniciar</T>
      </div>
      <div className="ml-[9px] flex gap-[2px]">
        <Task c="w-[159px] bg-[#3c81f3] pl-[10px] shadow-[inset_1px_1px_1px_#6ba5ff]" w={115} icon={<Firefox />}>.:: CAGECE - Compan...</Task>
        <Task c="w-[159px] bg-[#1e52b7] pl-[10px] pt-[2px] shadow-[inset_1px_1px_2px_#123a8c]" w={115} icon={<Firefox />}>Sistema PRAX - CAGE...</Task>
        <Task c="w-[158px] bg-[#3c81f3] pl-[7px] shadow-[inset_1px_1px_1px_#6ba5ff]" w={112} icon={<svg viewBox="0 0 16 16" className="h-4 w-4 flex-none"><path d="M2 2l9-1 3 12-9 2z" fill="#8fd6ea" stroke="#d7f3fa" /><path d="M2 3l9-2" stroke="#456" strokeDasharray="1 1" /><path d="M5 15l9-2v2z" fill="#c9b06c" /></svg>}>Sem título - Bloco de ...</Task>
      </div>
      <div className="ml-auto flex h-[30px] items-center">
        <svg viewBox="0 0 15 16" className="h-4 w-[15px]"><path d="M1 1h12v12h-1v2l-3-2H1z" fill="#fffbd0" stroke="#000" strokeWidth="1.300" /><path d="M5 5c0-3 4.500-3 4.500 0C9.500 7 7 7 7 9" fill="none" stroke="#14147a" strokeWidth="1.800" /><path d="M6 10.500h2v1.500H6z" fill="#14147a" /></svg>
        <svg viewBox="0 0 10 20" className="ml-[10px] h-5 w-[10px]"><path d="M3 4V1.500h5.500V5H6M1 4h5v3.500H1z" fill="none" stroke="#fff" strokeWidth="1.200" /><path d="M2 14h6l-3 3z" fill="#fff" /></svg>
        <div className="ml-4 flex h-[30px] w-[75px] items-center border-l border-[#0a4aa8] bg-[linear-gradient(#0d6fd8_0%,#18b7f2_8%,#1290e8_25%,#149bf0_80%,#0b62bd_100%)]">
          <svg viewBox="0 0 20 20" className="-ml-[10px] h-5 w-5"><circle cx="10" cy="10" r="9" fill="#2d8ff0" stroke="#6cbcf8" /><path d="M12 6l-4 4 4 4" fill="none" stroke="#fff" strokeWidth="2.200" /></svg>
          <svg viewBox="0 0 14 14" className="ml-[2px] h-[14px] w-[14px]"><path d="M0 0h14v14H0z" fill="#f4f4f4" /><path d="M0 0h4v5l6-5h4L7 7l2 3-4-1-5 5z" fill="#e3202c" /><path d="M7 7l6 2v5H8l2-2z" fill="#333" /></svg>
          <T w={28} c="ml-[7px] text-[11px]">14:57</T>
        </div>
      </div>
    </div>
  );
}

export default function App() {
  return (
    <div className="relative flex h-[1080px] w-[1920px] flex-col overflow-hidden bg-white font-['DejaVu_Sans',sans-serif]">
      <BrowserTop />
      <SiteHeader />
      <Content />
      <Footer />
      <Taskbar />
      <ClientPanel />
    </div>
  );
}
